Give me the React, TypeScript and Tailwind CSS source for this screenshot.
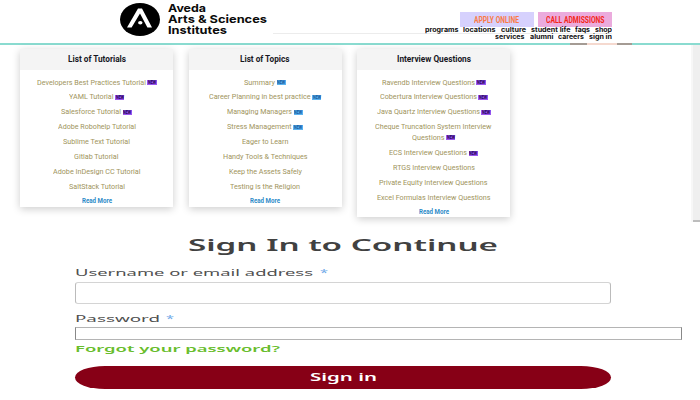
import React, { useLayoutEffect, useRef, useState } from 'react';

type FitProps = { w: number; className?: string; children: string };

// Stretches or condenses one line of text to a given width.
function Fit({ w, className = '', children }: FitProps) {
  const ref = useRef<HTMLSpanElement>(null);
  const [scale, setScale] = useState(1);
  useLayoutEffect(() => {
    if (ref.current && ref.current.offsetWidth) {
      const natural = parseFloat(getComputedStyle(ref.current).width);
      setScale(w / natural);
    }
  }, [w, children]);
  return (
    <span className={`block shrink-0 text-left whitespace-nowrap ${className}`} style={{ width: w }}>
      <span ref={ref} className="inline-block origin-left align-top" style={{ transform: `scaleX(${scale})` }}>
        {children}
      </span>
    </span>
  );
}

type Row = { t: string; w: number; badge?: boolean; tight?: boolean };
type CardData = { title: string; w: number; blue?: boolean; rows: Row[] };

const cards: CardData[] = [
  {
    title: 'List of Tutorials',
    w: 58,
    rows: [
      { t: 'Developers Best Practices Tutorial', w: 109, badge: true },
      { t: 'YAML Tutorial', w: 44.5, badge: true },
      { t: 'Salesforce Tutorial', w: 60, badge: true },
      { t: 'Adobe Robohelp Tutorial', w: 78 },
      { t: 'Sublime Text Tutorial', w: 67 },
      { t: 'Gitlab Tutorial', w: 44.5 },
      { t: 'Adobe InDesign CC Tutorial', w: 87.5 },
      { t: 'SaltStack Tutorial', w: 56 },
    ],
  },
  {
    title: 'List of Topics',
    w: 49.5,
    blue: true,
    rows: [
      { t: 'Summary', w: 31, badge: true },
      { t: 'Career Planning in best practice', w: 101.5, badge: true },
      { t: 'Managing Managers', w: 65, badge: true },
      { t: 'Stress Management', w: 64.5, badge: true },
      { t: 'Eager to Learn', w: 46.5 },
      { t: 'Handy Tools & Techniques', w: 84.5 },
      { t: 'Keep the Assets Safely', w: 73 },
      { t: 'Testing is the Religion', w: 70 },
    ],
  },
  {
    title: 'Interview Questions',
    w: 74,
    rows: [
      { t: 'Ravendb Interview Questions', w: 93, badge: true },
      { t: 'Cobertura Interview Questions', w: 97, badge: true },
      { t: 'Java Quartz Interview Questions', w: 103, badge: true },
      { t: 'Cheque Truncation System Interview', w: 116.5, tight: true },
      { t: 'Questions', w: 32.5, badge: true },
      { t: 'ECS Interview Questions', w: 78, badge: true },
      { t: 'RTGS Interview Questions', w: 82 },
      { t: 'Private Equity Interview Questions', w: 108.5 },
      { t: 'Excel Formulas Interview Questions', w: 113.5 },
    ],
  },
];

function Badge({ blue }: { blue?: boolean }) {
  return (
    <span
      className={`ml-[1.5px] flex h-[5px] w-[9.5px] justify-center text-[4.6px] leading-[5px] font-bold ${
        blue ? 'bg-[#5cb2ee] text-[#14599c]' : 'bg-[#9a55ee] text-[#210052]'
      }`}
    >
      <Fit w={8}>NEW</Fit>
    </span>
  );
}

function Card({ card }: { card: CardData }) {
  return (
    <section className="w-[153px] bg-white font-[Roboto,sans-serif] shadow-[0_2px_8px_rgba(0,0,0,0.2)]">
      <h2 className="flex h-[21px] items-center justify-center bg-[#f4f4f4] text-[8.8px] leading-[10px] font-bold text-[#17171f]">
        <Fit w={card.w}>{card.title}</Fit>
      </h2>
      <ul className="pt-[6px]">
        {card.rows.map((r) => (
          <li
            key={r.t}
            className={`flex items-center justify-center text-[8px] text-[#a0945c] ${
              r.tight ? 'h-[12.5px] pt-[2px] leading-[10.5px]' : r.t === 'Questions' ? 'h-[13px] pb-[3px] leading-[10px]' : 'h-[14.95px] leading-[14.95px]'
            }`}
          >
            <Fit w={r.w}>{r.t}</Fit>
            {r.badge && <Badge blue={card.blue} />}
          </li>
        ))}
      </ul>
      <div className="flex h-[11.5px] justify-center text-[7.4px] leading-[11.5px] font-bold text-[#2d8bc8]">
        <Fit w={30}>Read More</Fit>
      </div>
    </section>
  );
}

function Header() {
  return (
    <header className="relative flex h-[43px] bg-white pl-[120px]">
      <svg className="mt-[2.5px] h-[33px] w-[40px]" viewBox="0 0 40 33">
        <ellipse cx="20" cy="16.5" rx="20" ry="16.5" fill="#000" />
        <path d="M7 24.5 18 5.5h4L32 24.5h-4.6L20 10.5 11.6 24.5z" fill="#fff" />
        <ellipse cx="20.3" cy="19.8" rx="2.2" ry="1.8" fill="#fff" />
      </svg>
      <div className="ml-2 flex flex-col pt-[3px] font-[Inter,sans-serif] text-[11px] leading-[11.2px] font-bold text-[#0b0b0b]">
        <Fit w={38}>Aveda</Fit>
        <Fit w={99}>Arts &amp; Sciences</Fit>
        <Fit w={59}>Institutes</Fit>
      </div>
      <div className="absolute top-[33px] left-[273px] h-px w-[339px] bg-[#ececec]" />
      <div className="relative ml-auto flex flex-col items-end pt-3 pr-[88px] font-[Inter,sans-serif]">
        <div className="flex gap-[4.5px] font-[Roboto,sans-serif] text-[9.4px] leading-[15px] font-bold">
          <div className="flex h-[14.5px] w-[73.5px] justify-center bg-[#d6d1fd] text-[#fa7a45]">
            <Fit w={45}>APPLY ONLINE</Fit>
          </div>
          <div className="flex h-[14.5px] w-[74px] justify-center bg-[#ebabdd] text-[#f42618]">
            <Fit w={58.5}>CALL ADMISSIONS</Fit>
          </div>
        </div>
        <nav className="flex flex-col items-end text-[6.6px] leading-[7.2px] font-bold text-[#111]">
          <div className="flex gap-[5px]">
            <Fit w={33.5}>programs</Fit>
            <Fit w={32.5}>locations</Fit>
            <Fit w={25}>culture</Fit>
            <Fit w={39.5}>student life</Fit>
            <Fit w={15}>faqs</Fit>
            <Fit w={17}>shop</Fit>
          </div>
          <div className="flex gap-[5px]">
            <Fit w={29.5}>services</Fit>
            <Fit w={23.5}>alumni</Fit>
            <Fit w={26}>careers</Fit>
            <Fit w={23}>sign in</Fit>
          </div>
        </nav>
      </div>
    </header>
  );
}

export default function App() {
  return (
    <div className="flex h-[400px] w-[700px] flex-col overflow-hidden bg-white">
      <Header />
      <div className="flex h-[2px] shrink-0 bg-[#8adbd0] pl-[570px]">
        <span className="w-[17px] bg-[#a49b94]" />
        <span className="w-[30px] bg-[#f5d9cf]" />
        <span className="w-[15px] bg-[#a49b94]" />
      </div>
      <div className="flex h-[177px] shrink-0 justify-between">
        <div className="flex items-start gap-[15.5px] pt-[3.5px] pl-5">
          {cards.map((c) => (
            <Card key={c.title} card={c} />
          ))}
        </div>
        <div className="flex w-[9px] flex-col justify-end border-l-2 border-[#f7f7f7] bg-[#efefef]">
          <span className="h-[2px] bg-[#bdbdbd]" />
        </div>
      </div>
      <main className="flex flex-col pl-[75px] font-['Noto_Sans',sans-serif]">
        <h1 className="mt-[14px] ml-[113px] h-[18px] text-[15.2px] leading-[18px] font-semibold text-[#414141]">
          <Fit w={310}>Sign In to Continue</Fit>
        </h1>
        <label className="mt-[12px] flex h-[14px] gap-[7px] text-[9.8px] leading-[14px] text-[#505050]">
          <Fit w={238}>Username or email address</Fit>
          <Fit w={8} className="text-[#6fa8e8]">*</Fit>
        </label>
        <input className="mt-[1.5px] h-[22.5px] w-[536px] rounded-[3px] border border-[#d4d4d4] border-x-[#bbb] bg-white" />
        <label className="mt-[8px] flex h-[14px] gap-[6px] text-[9.8px] leading-[14px] text-[#505050]">
          <Fit w={85}>Password</Fit>
          <Fit w={8} className="text-[#6fa8e8]">*</Fit>
        </label>
        <input className="mt-px h-[13px] w-[607px] border border-[#b4b4b4] border-x-[#888] bg-white" />
        <a className="mt-[1.5px] h-[13.5px] text-[9.6px] leading-[14px] font-semibold text-[#68bd2c]">
          <Fit w={205}>Forgot your password?</Fit>
        </a>
        <button className="mt-[11px] flex h-[23px] w-[536px] justify-center rounded-[30px/11.5px] bg-[#870016] text-[9.8px] leading-[24px] font-semibold text-white">
          <Fit w={67}>Sign in</Fit>
        </button>
      </main>
    </div>
  );
}
